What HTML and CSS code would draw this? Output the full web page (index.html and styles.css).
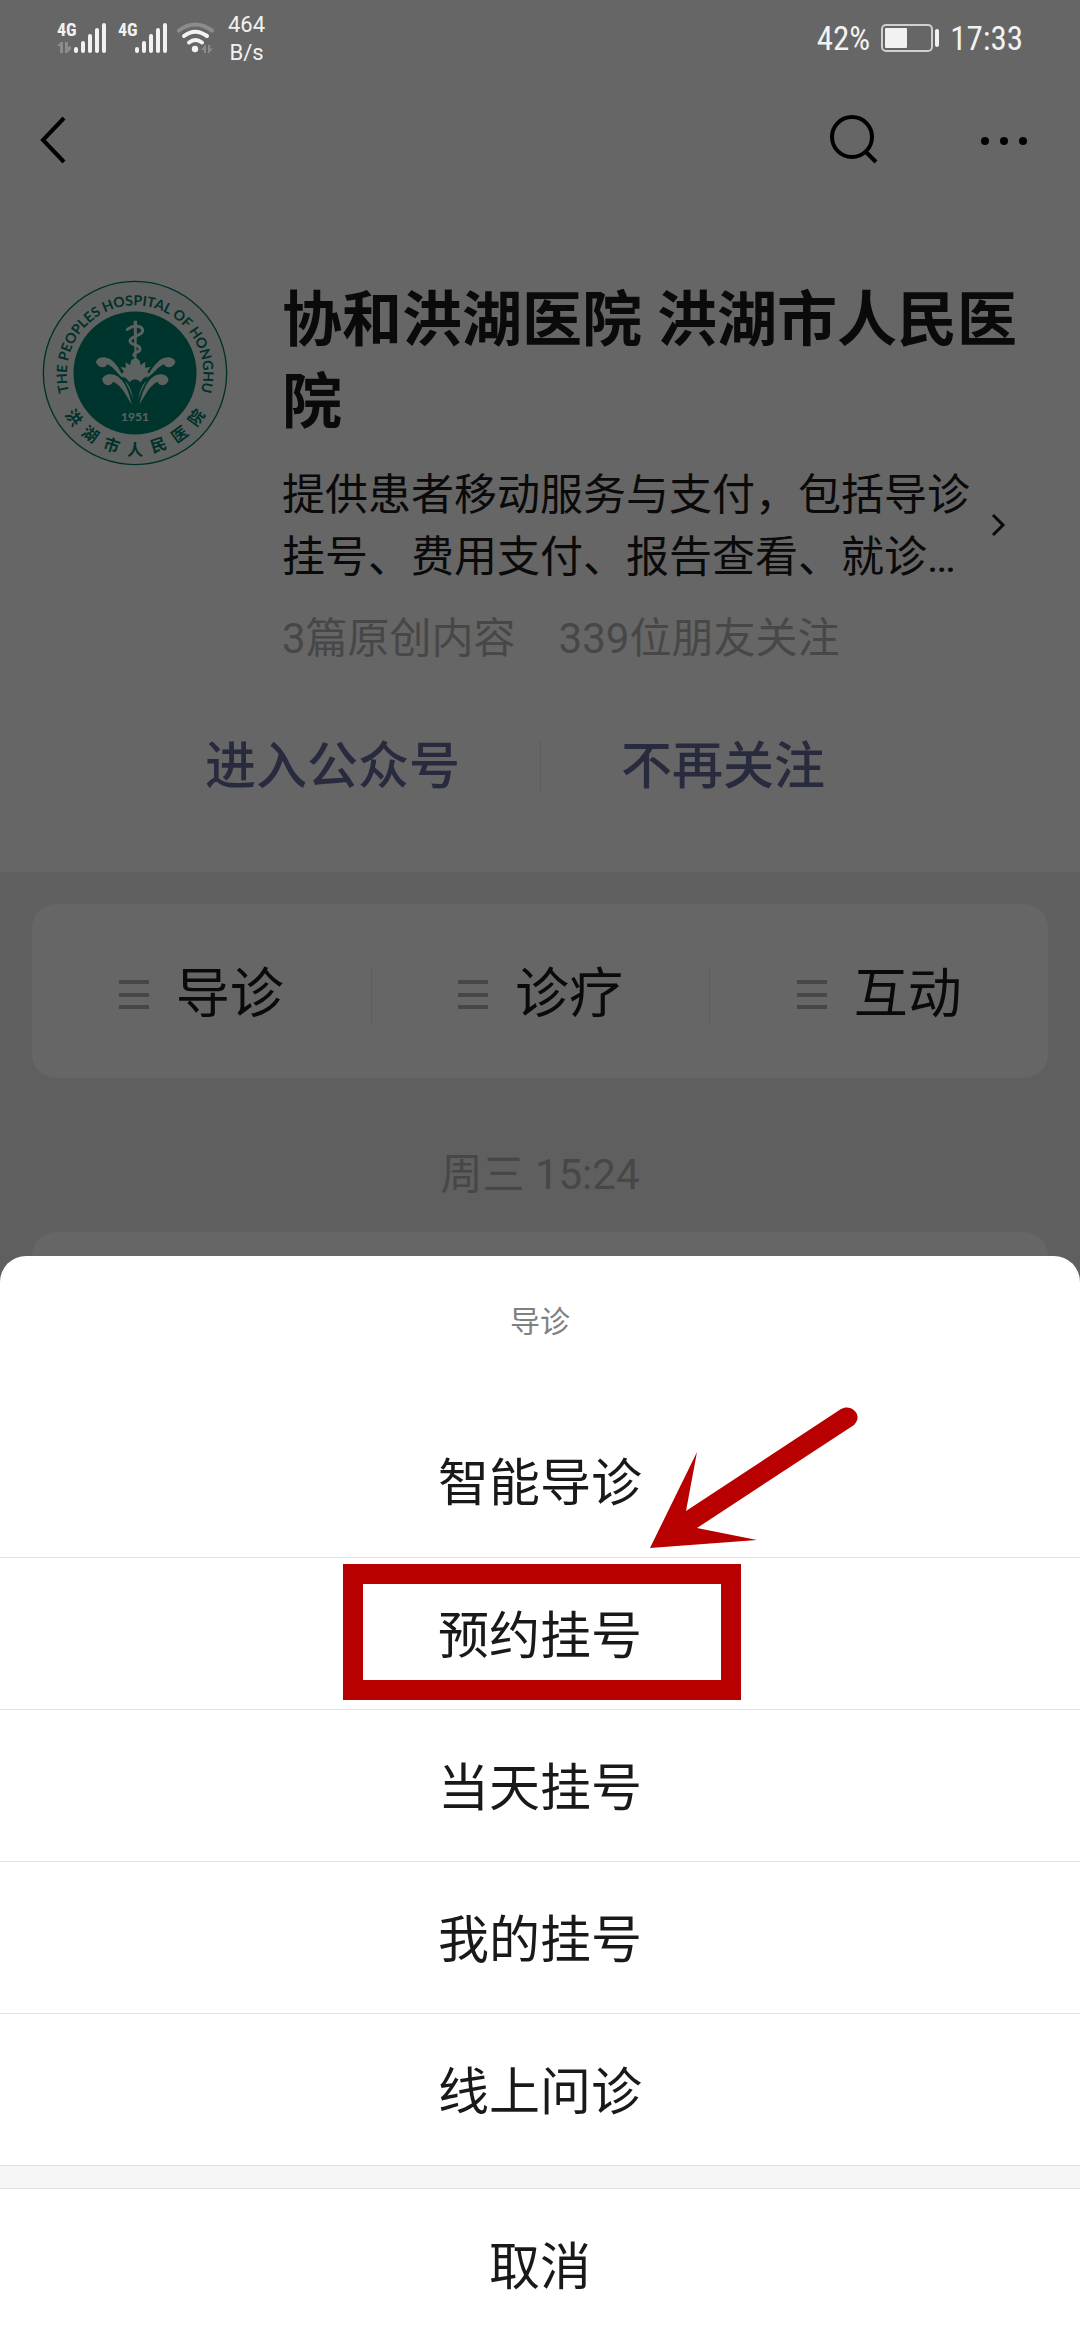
FILE: index.html
```html
<!DOCTYPE html>
<html lang="zh-CN">
<head>
<meta charset="utf-8">
<meta name="viewport" content="width=device-width, initial-scale=1">
<title>协和洪湖医院 洪湖市人民医院</title>
<link rel="stylesheet" href="styles.css">
</head>
<body>
<div class="screen">
  <header class="status">
    <div class="status-group">
      <div class="signal">
        <span class="net">4G</span>
        <svg class="signal-icon" width="50" height="32" viewBox="0 0 50 32" aria-hidden="true">
          <g class="bars"><rect x="17" y="25" width="4" height="6" rx="2"/><rect x="24" y="19" width="4" height="12" rx="2"/><rect x="31" y="12" width="4" height="19" rx="2"/><rect x="38" y="6" width="4" height="25" rx="2"/><rect x="45" y="1" width="4" height="30" rx="2"/></g>
          <path class="faint" d="M0 24L4 20H6V31H3V24ZM8 20H11V25L14 24V27L10 31H8Z"/>
        </svg>
      </div>
      <div class="signal">
        <span class="net">4G</span>
        <svg class="signal-icon" width="50" height="32" viewBox="0 0 50 32" aria-hidden="true">
          <g class="bars"><rect x="17" y="25" width="4" height="6" rx="2"/><rect x="24" y="19" width="4" height="12" rx="2"/><rect x="31" y="12" width="4" height="19" rx="2"/><rect x="38" y="6" width="4" height="25" rx="2"/><rect x="45" y="1" width="4" height="30" rx="2"/></g>
        </svg>
      </div>
      <svg class="wifi" width="37" height="32" viewBox="0 0 37 32" aria-hidden="true">
        <path class="arc faint-line" d="M2 8.500Q18 -3.500 35 8.500"/>
        <path class="arc" d="M7 14Q18 5.500 30 14"/>
        <path class="arc" d="M12 20.500Q18.500 15.500 25 20.500"/>
        <circle class="bars" cx="18" cy="27" r="3.200"/>
        <path class="faint" d="M24 28L28 23H29V31H27V28ZM31 23H33V27L36 26L32 31H31Z"/>
      </svg>
      <div class="speed"><span>464</span><span>B/s</span></div>
    </div>
    <div class="status-group status-right">
      <span class="status-text">42%</span>
      <svg width="58" height="28" viewBox="0 0 58 28" aria-hidden="true">
        <rect class="cell" x="1" y="1" width="50" height="26" rx="4"/>
        <rect class="bars" x="4" y="4" width="22" height="20" rx="1"/>
        <rect class="bars" x="54" y="5" width="4" height="18" rx="2"/>
      </svg>
      <span class="status-text">17:33</span>
    </div>
  </header>

  <main class="content">
    <nav class="nav">
      <button class="icon-button" type="button" aria-label="返回">
        <svg width="28" height="50" viewBox="0 0 28 50"><path class="line" d="M25 3L4 25L25 47"/></svg>
      </button>
      <div class="nav-tools">
        <button class="icon-button" type="button" aria-label="搜索">
          <svg width="50" height="50" viewBox="0 0 50 50"><circle class="line" cx="22" cy="22" r="20"/><path class="line" d="M36 37L46 47"/></svg>
        </button>
        <button class="icon-button" type="button" aria-label="更多">
          <svg width="48" height="10" viewBox="0 0 48 10"><circle cx="5" cy="6" r="4"/><circle cx="24" cy="6" r="4"/><circle cx="43" cy="6" r="4"/></svg>
        </button>
      </div>
    </nav>

    <section class="profile">
      <svg class="logo" viewBox="67 58 556 556" role="img" aria-label="洪湖市人民医院">
        <defs><path id="ring" d="M160 424A204 204 0 1 1 530 424"/></defs>
        <circle class="logo-rim" cx="345" cy="336" r="274"/>
        <circle class="logo-disc" cx="345" cy="336" r="184"/>
        <text class="logo-latin"><textPath href="#ring" startOffset="50%">THE PEOPLES HOSPITAL OF HONGHU</textPath></text>
        <g class="logo-cn" text-anchor="middle">
          <text x="345" y="580" transform="rotate(54 345 336)">洪</text>
          <text x="345" y="580" transform="rotate(36 345 336)">湖</text>
          <text x="345" y="580" transform="rotate(18 345 336)">市</text>
          <text x="345" y="580">人</text>
          <text x="345" y="580" transform="rotate(-18 345 336)">民</text>
          <text x="345" y="580" transform="rotate(-36 345 336)">医</text>
          <text x="345" y="580" transform="rotate(-54 345 336)">院</text>
        </g>
        <text class="logo-year" x="345" y="480" text-anchor="middle">1951</text>
        <g class="logo-art">
          <path d="M341 180H351V192L349 300H344L341 192Z"/>
          <path class="snake" d="M322 206C336 192 368 192 368 210C368 226 330 224 330 240C330 254 360 250 360 264C360 276 340 272 342 284"/>
          <path d="M300 342L312 332L302 318L318 320L316 304L330 312L334 298L346 290L358 298L362 312L376 302L375 320L392 318L382 332L390 342Q366 350 362 364Q345 346 328 364Q322 350 300 342Z"/>
          <path d="M228 302C236 284 262 286 278 300C294 314 302 332 312 352C290 340 284 318 262 310C256 324 234 322 228 302Z"/>
          <path d="M466 302C458 284 432 286 416 300C400 314 390 332 378 352C402 340 410 318 432 310C438 324 460 322 466 302Z"/>
          <path d="M247 355C253 336 282 336 298 350C318 366 328 398 335 430C318 402 306 374 280 362C272 378 250 376 247 355Z"/>
          <path d="M445 355C439 336 412 336 396 350C376 366 366 398 358 430C376 402 388 374 412 362C420 378 442 376 445 355Z"/>
          <path d="M314 358Q334 378 339 414Q330 386 314 358ZM380 358Q360 378 355 414Q364 386 380 358Z"/>
        </g>
      </svg>
      <div class="profile-info">
        <h1 class="profile-name">协和洪湖医院 洪湖市人民医院</h1>
        <a class="profile-desc" href="#detail">
          <span class="desc-text">提供患者移动服务与支付，包括导诊挂号、费用支付、报告查看、就诊…</span>
          <svg width="18" height="26" viewBox="0 0 18 26" aria-hidden="true"><path class="thin-line" d="M5 2L15 12L5 22"/></svg>
        </a>
        <p class="profile-meta"><span>3篇原创内容</span><span>339位朋友关注</span></p>
      </div>
      <div class="actions">
        <button class="action" type="button">进入公众号</button>
        <button class="action" type="button">不再关注</button>
      </div>
    </section>

    <section class="feed">
      <div class="menu card">
        <button class="menu-item" type="button"><svg class="menu-icon" width="30" height="30" viewBox="0 0 30 30" aria-hidden="true"><path d="M0 0H30V4H0ZM0 13H30V17H0ZM0 25H30V29H0Z"/></svg>导诊</button>
        <button class="menu-item" type="button"><svg class="menu-icon" width="30" height="30" viewBox="0 0 30 30" aria-hidden="true"><path d="M0 0H30V4H0ZM0 13H30V17H0ZM0 25H30V29H0Z"/></svg>诊疗</button>
        <button class="menu-item" type="button"><svg class="menu-icon" width="30" height="30" viewBox="0 0 30 30" aria-hidden="true"><path d="M0 0H30V4H0ZM0 13H30V17H0ZM0 25H30V29H0Z"/></svg>互动</button>
      </div>
      <time class="feed-time">周三 15:24</time>
      <article class="post card"></article>
    </section>
  </main>

  <div class="scrim"></div>

  <div class="sheet" role="dialog" aria-labelledby="sheet-title">
    <h2 class="sheet-title" id="sheet-title">导诊</h2>
    <button class="sheet-item" type="button">智能导诊
      <svg class="arrow" width="208" height="144" viewBox="0 0 208 144" aria-hidden="true"><path d="M0 142L47 46L36 105L191 3C201 -3 214 9 204 19L47 122L107 134Z"/></svg>
    </button>
    <button class="sheet-item" type="button">预约挂号<span class="highlight"></span></button>
    <button class="sheet-item" type="button">当天挂号</button>
    <button class="sheet-item" type="button">我的挂号</button>
    <button class="sheet-item" type="button">线上问诊</button>
    <div class="sheet-gap"></div>
    <button class="sheet-item sheet-cancel" type="button">取消</button>
  </div>
</div>
</body>
</html>
```
FILE: styles.css
```css
* {
  box-sizing: border-box;
}

body {
  margin: 0;
  font-family: Roboto, "Noto Sans CJK SC", sans-serif;
  color: #191919;
  background: #fff;
}

button {
  margin: 0;
  padding: 0;
  border: 0;
  background: none;
  color: inherit;
  font: inherit;
}

h1, h2, p {
  margin: 0;
}

svg {
  display: block;
  flex: none;
}

.screen {
  position: relative;
  display: flex;
  flex-direction: column;
  min-height: 100vh;
  overflow: hidden;
}

/* Status bar, kept above the scrim */
.status {
  position: relative;
  z-index: 2;
  display: flex;
  justify-content: space-between;
  height: 76px;
  padding: 0 57px;
  color: #f2f2f2;
}

.status-group {
  display: flex;
  align-items: center;
}

.signal {
  position: relative;
  margin-right: 11px;
}

.net {
  position: absolute;
  top: 0;
  left: 0;
  font: bold 18px/16px "Roboto Condensed", "Liberation Sans Narrow", Roboto, sans-serif;
}

.bars {
  fill: #f2f2f2;
}

.faint {
  fill: #8c8c8c;
}

.arc {
  fill: none;
  stroke: #f2f2f2;
  stroke-width: 4;
  stroke-linecap: round;
}

.faint-line {
  stroke: #8c8c8c;
}

.wifi {
  margin: 0 14px 0 -2px;
}

.speed {
  display: flex;
  flex-direction: column;
  align-items: center;
  padding-top: 2px;
  font-size: 22px;
  line-height: 28px;
}

.status-right {
  gap: 11px;
}

.status-text {
  padding-top: 2px;
  font: 33px/38px "Roboto Condensed", "Liberation Sans Narrow", Roboto, sans-serif;
}

.cell {
  fill: none;
  stroke: #d0d0d0;
  stroke-width: 2;
}

/* Page */
.content {
  display: flex;
  flex: 1;
  flex-direction: column;
}

.nav {
  display: flex;
  align-items: center;
  justify-content: space-between;
  height: 128px;
  padding: 0 52px 0 39px;
}

.nav-tools {
  display: flex;
  align-items: center;
  gap: 100px;
}

.line {
  fill: none;
  stroke: #000;
  stroke-width: 4;
}

.thin-line {
  fill: none;
  stroke: #191919;
  stroke-width: 3;
}

.profile {
  display: grid;
  grid-template-columns: 186px 1fr;
  column-gap: 54px;
  padding: 76px 42px 79px;
}

.logo {
  width: 186px;
  height: 186px;
}

.logo-rim {
  fill: #f0f8f6;
  stroke: #007a68;
  stroke-width: 4;
}

.logo-disc {
  fill: #008470;
}

.logo-latin {
  fill: #007a68;
  font: bold 42px Lato, sans-serif;
  text-anchor: middle;
}

.logo-cn {
  fill: #007a68;
  font: bold 48px "Noto Sans CJK SC", sans-serif;
}

.logo-year {
  fill: #e4f4f1;
  font: bold 36px Lato, sans-serif;
}

.logo-art {
  fill: #e4f4f1;
}

.snake {
  fill: none;
  stroke: #e4f4f1;
  stroke-width: 9;
  stroke-linecap: round;
}

.profile-name {
  font-size: 60px;
  font-weight: bold;
  line-height: 82px;
}

.profile-desc {
  display: flex;
  align-items: center;
  gap: 16px;
  margin-top: 20px;
  color: inherit;
  font-size: 43px;
  line-height: 62px;
  text-decoration: none;
}

.desc-text {
  max-width: 690px;
}

.profile-meta {
  display: flex;
  gap: 43px;
  margin-top: 26px;
  color: #b2b2b2;
  font-size: 42px;
  line-height: 50px;
}

.actions {
  display: grid;
  grid-column: 1 / -1;
  grid-template-columns: 1fr 1fr;
  margin-top: 77px;
}

.action {
  padding: 0 80px;
  color: #646c9c;
  font-size: 51px;
  font-weight: 500;
  line-height: 52px;
  text-align: right;
}

.action + .action {
  border-left: 1px solid #e5e5e5;
  text-align: left;
}

.feed {
  display: flex;
  flex: 1;
  flex-direction: column;
  padding: 32px 32px 0;
  background: #ededed;
}

.card {
  border-radius: 24px;
  background: #fff;
}

.menu {
  display: grid;
  grid-template-columns: repeat(3, 1fr);
  padding: 64px 0 56px;
}

.menu-item {
  display: flex;
  align-items: center;
  justify-content: center;
  gap: 27px;
  font-size: 54px;
  line-height: 54px;
}

.menu-item + .menu-item {
  border-left: 1px solid #e5e5e5;
}

.menu-icon {
  fill: #b2b2b2;
}

.feed-time {
  margin: 67px 0 27px;
  color: #b2b2b2;
  font-size: 42px;
  line-height: 60px;
  text-align: center;
}

.post {
  flex: 1;
}

.scrim {
  position: absolute;
  z-index: 1;
  inset: 0;
  background: rgba(0, 0, 0, 0.6);
}

/* Action sheet */
.sheet {
  position: fixed;
  z-index: 3;
  right: 0;
  bottom: 0;
  left: 0;
  display: flex;
  flex-direction: column;
  border-radius: 26px 26px 0 0;
  background: #fff;
}

.sheet-title {
  padding: 46px 0 63px;
  color: #808080;
  font-size: 30px;
  font-weight: normal;
  line-height: 40px;
  text-align: center;
}

.sheet-item {
  position: relative;
  height: 152px;
  padding-top: 6px;
  font-size: 51px;
  line-height: 72px;
}

.sheet-item + .sheet-item {
  border-top: 1px solid #e2e2e2;
}

.sheet-gap {
  height: 24px;
  border: solid #e2e2e2;
  border-width: 1px 0;
  background: #f6f6f6;
}

.sheet-cancel {
  height: 151px;
}

.arrow {
  position: absolute;
  top: 1px;
  left: calc(50% + 110px);
  fill: #b80000;
}

.highlight {
  position: absolute;
  top: 6px;
  left: calc(50% - 197px);
  width: 398px;
  height: 136px;
  border: 20px solid #b80000;
}
```
